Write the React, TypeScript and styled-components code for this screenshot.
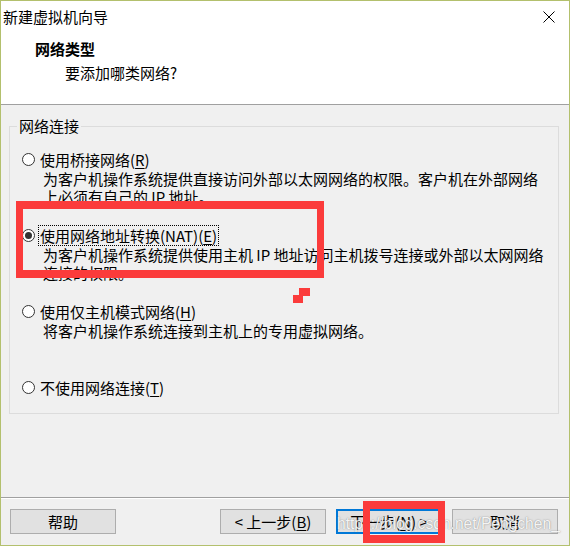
import React from 'react';
import styled, { createGlobalStyle } from 'styled-components';

const FONT = `"Noto Sans CJK SC", "Noto Sans", sans-serif`;

const Global = createGlobalStyle`
  html, body { margin: 0; padding: 0; }
  body { width: 570px; height: 546px; overflow: hidden; background: #f0f0f0; }
  *, *::before, *::after { box-sizing: border-box; }
`;

const Window = styled.div`
  position: relative;
  width: 570px;
  height: 546px;
  border: 1px solid #b3c06d;
  display: flex;
  flex-direction: column;
  font-family: ${FONT};
  font-size: 15px;
  color: #000;
  background: #f0f0f0;
  overflow: hidden;
`;

const Header = styled.header`
  height: 104px;
  flex: none;
  background: #fff;
  border-bottom: 1px solid #a0a0a0;
  display: flex;
  flex-direction: column;
`;

const TitleBar = styled.div`
  height: 31px;
  display: flex;
  align-items: center;
  justify-content: space-between;
  padding: 0 14px 0 2px;
`;

const Title = styled.span`
  line-height: 20px;
`;

const CloseIcon = styled.svg`
  width: 12px;
  height: 12px;
  display: block;
`;

const Heading = styled.div`
  margin-top: 7px;
  padding-left: 34px;
  font-weight: 700;
  line-height: 20px;
`;

const Subheading = styled.div`
  margin-top: 4px;
  padding-left: 64px;
  line-height: 20px;
`;

const Body = styled.main`
  flex: 1;
  padding: 11px 10px 0 8px;
`;

const Group = styled.fieldset`
  margin: 0;
  padding: 12px 0 15px 0;
  min-width: 0;
  border: 1px solid #dcdcdc;
`;

const Legend = styled.legend`
  margin-left: 7px;
  padding: 0 2px;
  line-height: 20px;
`;

const OptionList = styled.div`
  display: grid;
  grid-template-rows: 58px 58px 58px 22px;
  row-gap: 18px;
`;

const Option = styled.div`
  display: flex;
  flex-direction: column;
`;

const OptionRow = styled.div`
  height: 22px;
  display: flex;
  align-items: center;
  padding-left: 12px;
`;

const Radio = styled.span<{ $checked?: boolean }>`
  flex: none;
  width: 13px;
  height: 13px;
  border-radius: 50%;
  border: 1px solid #333;
  background: #fff;
  display: flex;
  align-items: center;
  justify-content: center;
  &::after {
    content: '';
    width: 7px;
    height: 7px;
    border-radius: 50%;
    background: #333;
    display: ${(p) => (p.$checked ? 'block' : 'none')};
  }
`;

const OptionLabel = styled.span<{ $focused?: boolean }>`
  margin-left: 3px;
  padding: 0 1px;
  line-height: 19px;
  border: 1px dotted ${(p) => (p.$focused ? '#000' : 'transparent')};
  white-space: nowrap;
`;

const Key = styled.span`
  text-decoration: underline;
  text-underline-offset: 2px;
`;

const Desc = styled.div`
  padding-left: 33px;
  line-height: 18px;
  white-space: nowrap;
`;

const Footer = styled.footer`
  height: 48px;
  flex: none;
  display: flex;
  align-items: flex-start;
  padding: 11px 11px 0 9px;
  border-top: 1px solid #a0a0a0;
  box-shadow: inset 0 1px 0 #fff;
`;

const NavButtons = styled.div`
  margin-left: auto;
  display: flex;
  gap: 10px;
`;

const Button = styled.button<{ $focused?: boolean }>`
  width: 106px;
  height: 25px;
  padding: 0;
  background: #e1e1e1;
  border: ${(p) => (p.$focused ? '2px solid #0078d7' : '1px solid #adadad')};
  font-family: ${FONT};
  font-size: 15px;
  line-height: 1;
  color: #000;
  display: flex;
  align-items: center;
  justify-content: center;
  white-space: pre;
`;

const Highlight = styled.div<{ $x: number; $y: number; $w: number; $h: number }>`
  position: absolute;
  left: ${(p) => p.$x}px;
  top: ${(p) => p.$y}px;
  width: ${(p) => p.$w}px;
  height: ${(p) => p.$h}px;
  border-style: solid;
  border-color: #fb3b3b;
  border-width: 8px 7px;
  pointer-events: none;
`;

const Mark = styled.div<{ $x: number; $y: number; $w: number; $h: number }>`
  position: absolute;
  left: ${(p) => p.$x}px;
  top: ${(p) => p.$y}px;
  width: ${(p) => p.$w}px;
  height: ${(p) => p.$h}px;
  background: #fb3b3b;
`;

const Watermark = styled.div`
  position: absolute;
  left: 336px;
  top: 513px;
  font-family: "Liberation Sans", Arial, sans-serif;
  font-size: 15.6px;
  line-height: 20px;
  color: rgba(255, 255, 255, 0.92);
  text-shadow: 0 0 1px rgba(90, 90, 90, 0.6), 0 0 2px rgba(120, 120, 120, 0.35);
  white-space: nowrap;
  pointer-events: none;
`;

export default function App() {
  return (
    <>
      <Global />
      <Window>
        <Header>
          <TitleBar>
            <Title>新建虚拟机向导</Title>
            <CloseIcon viewBox="0 0 12 12">
              <path d="M0.5 0.5 L11.5 11.5 M11.5 0.5 L0.5 11.5" stroke="#000" strokeWidth="1" fill="none" />
            </CloseIcon>
          </TitleBar>
          <Heading>网络类型</Heading>
          <Subheading>要添加哪类网络?</Subheading>
        </Header>
        <Body>
          <Group>
            <Legend>网络连接</Legend>
            <OptionList>
              <Option>
                <OptionRow>
                  <Radio />
                  <OptionLabel>
                    使用桥接网络(<Key>R</Key>)
                  </OptionLabel>
                </OptionRow>
                <Desc>
                  为客户机操作系统提供直接访问外部以太网网络的权限。客户机在外部网络
                  <br />
                  上必须有自己的 IP 地址。
                </Desc>
              </Option>
              <Option>
                <OptionRow>
                  <Radio $checked />
                  <OptionLabel $focused>
                    使用网络地址转换(NAT)(<Key>E</Key>)
                  </OptionLabel>
                </OptionRow>
                <Desc>
                  为客户机操作系统提供使用主机 IP 地址访问主机拨号连接或外部以太网网络
                  <br />
                  连接的权限。
                </Desc>
              </Option>
              <Option>
                <OptionRow>
                  <Radio />
                  <OptionLabel>
                    使用仅主机模式网络(<Key>H</Key>)
                  </OptionLabel>
                </OptionRow>
                <Desc>将客户机操作系统连接到主机上的专用虚拟网络。</Desc>
              </Option>
              <Option>
                <OptionRow>
                  <Radio />
                  <OptionLabel>
                    不使用网络连接(<Key>T</Key>)
                  </OptionLabel>
                </OptionRow>
              </Option>
            </OptionList>
          </Group>
        </Body>
        <Footer>
          <Button>帮助</Button>
          <NavButtons>
            <Button>
              {'< 上一步('}<Key>B</Key>{')'}
            </Button>
            <Button $focused>
              {'下一步('}<Key>N</Key>{') >'}
            </Button>
            <Button>取消</Button>
          </NavButtons>
        </Footer>
        <Highlight $x={15} $y={200} $w={308} $h={77} />
        <Mark $x={298} $y={287} $w={11} $h={8} />
        <Mark $x={292} $y={294} $w={10} $h={8} />
        <Watermark>https://blog.csdn.net/Pengchen_</Watermark>
        <Highlight $x={362} $y={500} $w={82} $h={42} />
      </Window>
    </>
  );
}
